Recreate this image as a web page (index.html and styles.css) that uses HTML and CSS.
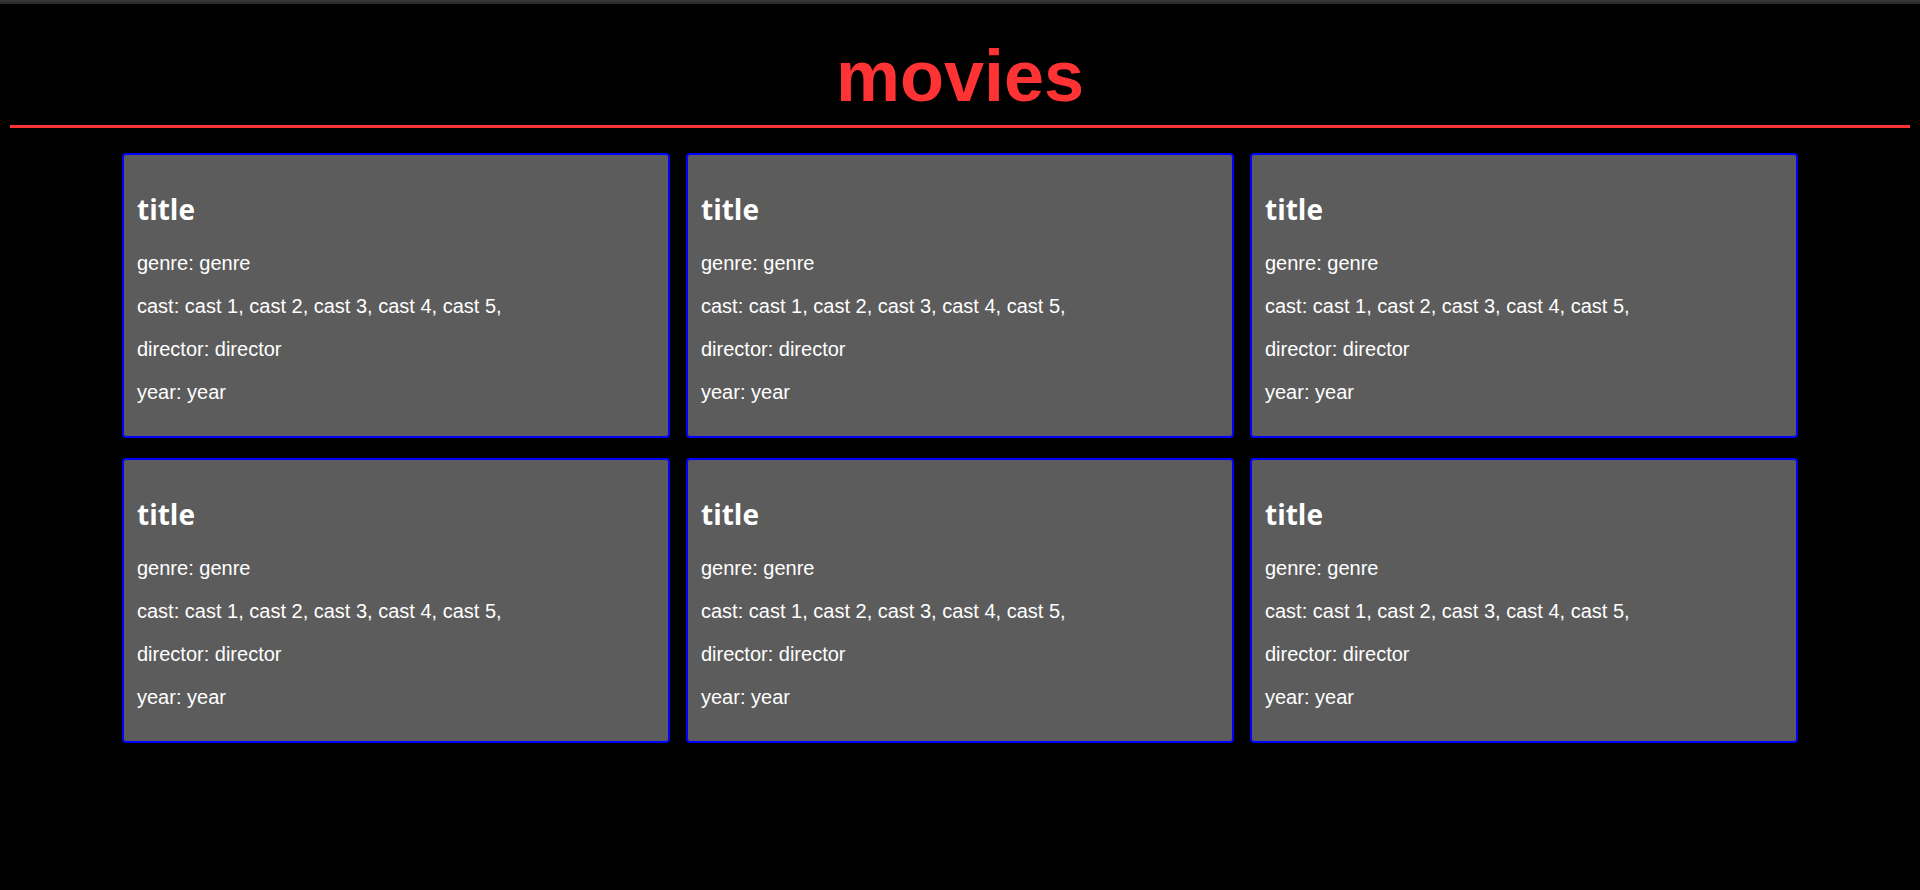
FILE: index.html
```html
<!DOCTYPE html>
<html lang="en">
<head>
<meta charset="utf-8">
<title>movies</title>
<link rel="stylesheet" href="styles.css">
</head>
<body>
<div class="topbar"></div>
<div class="page">
  <h1 class="page-title">movies</h1>
  <div class="rule"></div>
  <div class="grid">
    <div class="card">
      <h2 class="card-title">title</h2>
      <p class="card-line">genre: genre</p>
      <p class="card-line">cast: cast 1, cast 2, cast 3, cast 4, cast 5,</p>
      <p class="card-line">director: director</p>
      <p class="card-line">year: year</p>
    </div>
    <div class="card">
      <h2 class="card-title">title</h2>
      <p class="card-line">genre: genre</p>
      <p class="card-line">cast: cast 1, cast 2, cast 3, cast 4, cast 5,</p>
      <p class="card-line">director: director</p>
      <p class="card-line">year: year</p>
    </div>
    <div class="card">
      <h2 class="card-title">title</h2>
      <p class="card-line">genre: genre</p>
      <p class="card-line">cast: cast 1, cast 2, cast 3, cast 4, cast 5,</p>
      <p class="card-line">director: director</p>
      <p class="card-line">year: year</p>
    </div>
    <div class="card">
      <h2 class="card-title">title</h2>
      <p class="card-line">genre: genre</p>
      <p class="card-line">cast: cast 1, cast 2, cast 3, cast 4, cast 5,</p>
      <p class="card-line">director: director</p>
      <p class="card-line">year: year</p>
    </div>
    <div class="card">
      <h2 class="card-title">title</h2>
      <p class="card-line">genre: genre</p>
      <p class="card-line">cast: cast 1, cast 2, cast 3, cast 4, cast 5,</p>
      <p class="card-line">director: director</p>
      <p class="card-line">year: year</p>
    </div>
    <div class="card">
      <h2 class="card-title">title</h2>
      <p class="card-line">genre: genre</p>
      <p class="card-line">cast: cast 1, cast 2, cast 3, cast 4, cast 5,</p>
      <p class="card-line">director: director</p>
      <p class="card-line">year: year</p>
    </div>
  </div>
</div>
</body>
</html>
```

FILE: styles.css
```css
html, body {
  margin: 0;
  padding: 0;
  background: #000;
}

body {
  font-family: "Liberation Sans", Arial, sans-serif;
  color: #fff;
}

.topbar {
  height: 4px;
  background: linear-gradient(#353535 0, #353535 2px, #2a2a2a 2px, #2a2a2a 4px);
}

.page {
  padding: 0 10px;
}

.page-title {
  margin: 31px 0 7px;
  font-family: "Liberation Sans", Arial, sans-serif;
  font-size: 72px;
  line-height: 83px;
  font-weight: bold;
  color: #ff3333;
  text-align: center;
}

.rule {
  height: 3px;
  background: #ff3333;
}

.grid {
  width: 1676px;
  margin: 25px auto 0;
  display: grid;
  grid-template-columns: repeat(3, 1fr);
  column-gap: 16px;
  row-gap: 20px;
}

.card {
  background: #5c5c5c;
  border: 2px solid #0000ff;
  border-radius: 4px;
  padding: 13px 13px 12px;
  display: flex;
  flex-direction: column;
}

.card-title {
  margin: 24px 0 26px;
  font-family: "Open Sans", "Noto Sans", sans-serif;
  font-size: 28px;
  line-height: 34px;
  font-weight: 700;
}

.card-line {
  margin: 0 0 20px;
  font-size: 20px;
  line-height: 23px;
}
```
